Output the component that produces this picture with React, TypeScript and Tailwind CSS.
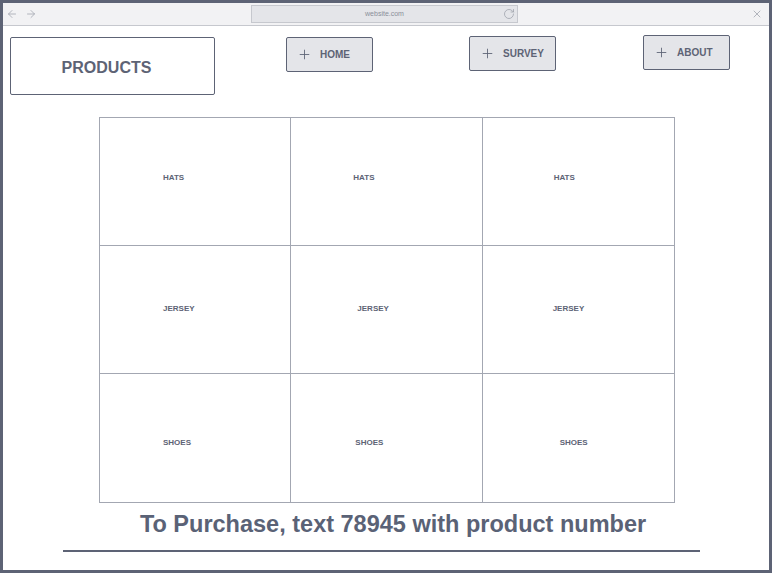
import { ArrowLeft, ArrowRight, Plus, RotateCw, X } from "lucide-react";

const font = { fontFamily: '"Liberation Sans", Arial, sans-serif' };

const rows = [
  { label: "HATS", top: "pt-[54px]", pads: ["pl-[63px]", "pl-[62px]", "pl-[71px]"] },
  { label: "JERSEY", top: "pt-[57px]", pads: ["pl-[63px]", "pl-[66px]", "pl-[70px]"] },
  { label: "SHOES", top: "pt-[63px]", pads: ["pl-[63px]", "pl-[64px]", "pl-[77px]"] },
];

function NavButton({ label, className }: { label: string; className: string }) {
  return (
    <button
      type="button"
      className={`flex h-[35px] w-[87px] items-center gap-[8px] rounded-[2px] border-[1.5px] border-[#5d6375] bg-[#e4e5e9] pl-[10px] text-[10px] font-bold text-[#5d6375] ${className}`}
    >
      <Plus className="h-[15px] w-[15px]" strokeWidth={1.4} />
      {label}
    </button>
  );
}

export default function App() {
  return (
    <div className="h-[575px] w-[773px] bg-white" style={font}>
      <div className="flex h-[573px] w-[772px] flex-col border-[3px] border-[#5d6375] bg-white">
        <div className="flex h-[23px] items-center border-b border-[#c6c8ce] bg-[#f2f2f4]">
          <div className="flex w-[248px] items-center gap-[7px] pl-[3px] text-[#a2a6b0]">
            <ArrowLeft className="h-[12px] w-[12px]" strokeWidth={1.6} />
            <ArrowRight className="h-[12px] w-[12px]" strokeWidth={1.6} />
          </div>
          <div className="relative flex h-[18px] w-[267px] items-center justify-center border border-[#c6c8ce] bg-[#e4e5e9] text-[7px] text-[#8a8f9a]">
            website.com
            <RotateCw className="absolute right-[2px] top-[2px] h-[12px] w-[12px] text-[#9ca0aa]" strokeWidth={1.5} />
          </div>
          <div className="flex flex-1 justify-end pr-[6px] text-[#9ca0aa]">
            <X className="h-[12px] w-[12px]" strokeWidth={1.5} />
          </div>
        </div>

        <div className="flex items-start pl-[7px] pt-[10px]">
          <div className="mt-[1px] flex h-[58px] w-[205px] items-center justify-center rounded-[2px] border-[1.5px] border-[#5d6375] pr-[12px] pt-[4px] text-[16px] font-bold text-[#5d6375]">
            PRODUCTS
          </div>
          <NavButton label="HOME" className="ml-[71px] mt-[1px] w-[86px]" />
          <NavButton label="SURVEY" className="ml-[96px]" />
          <NavButton label="ABOUT" className="-mt-[1px] ml-[87px]" />
        </div>

        <div className="ml-[96px] mt-[22px] grid w-[576px] grid-cols-3 border border-[#a3a7b2]">
          {rows.map((row, r) =>
            row.pads.map((pad, c) => (
              <div
                key={`${r}-${c}`}
                className={`h-[128px] text-[8px] font-bold text-[#5d6375] ${row.top} ${pad} ${
                  c < 2 ? "border-r border-[#a3a7b2]" : ""
                } ${r < 2 ? "border-b border-[#a3a7b2]" : ""}`}
              >
                {row.label}
              </div>
            ))
          )}
        </div>

        <div className="mt-[6px] pl-[14px] text-center text-[23.5px] font-bold leading-[31px] text-[#5a6276]">
          To Purchase, text 78945 with product number
        </div>
        <div className="ml-[60px] mt-[10px] h-[2px] w-[637px] bg-[#5d6375]" />
      </div>
    </div>
  );
}
